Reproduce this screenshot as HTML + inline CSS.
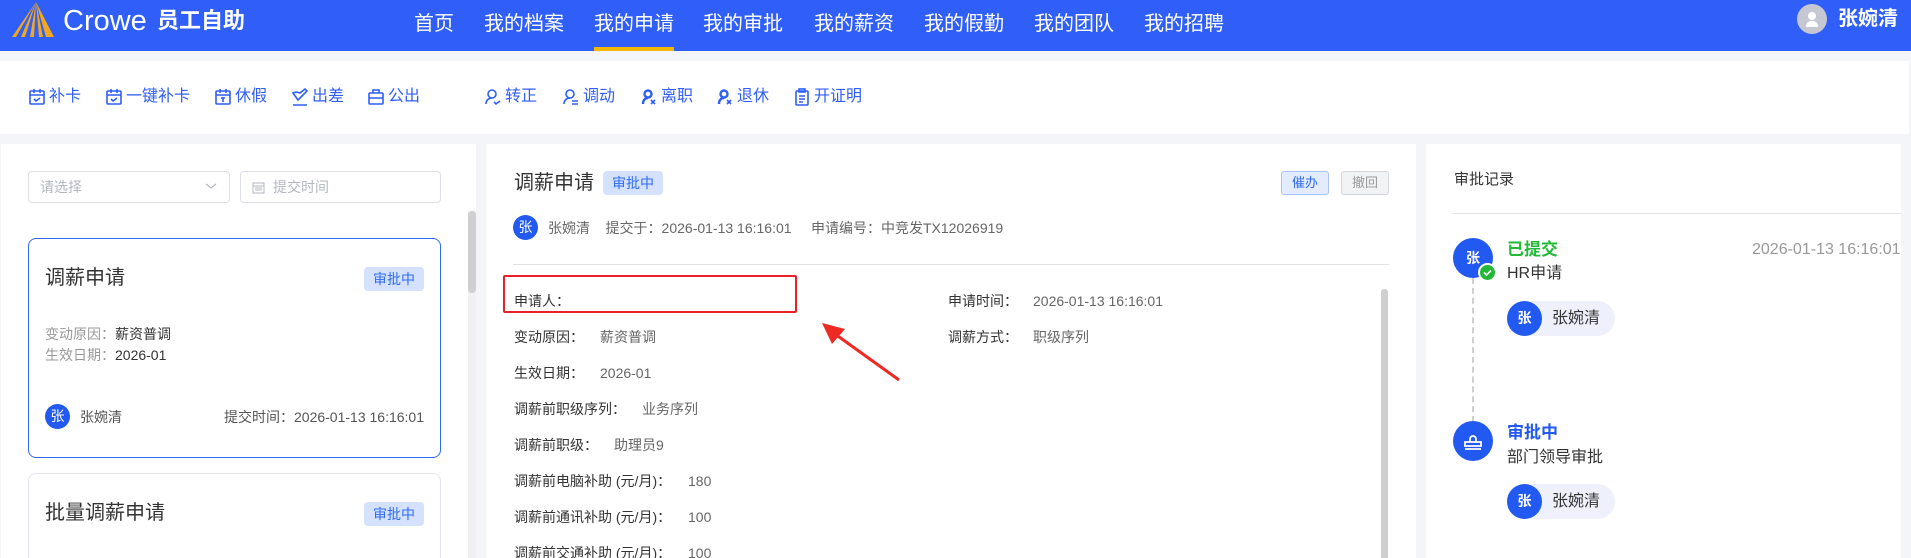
<!DOCTYPE html>
<html style="width:1911px;height:558px;overflow:hidden"><head><meta charset="utf-8"><style>
*{margin:0;padding:0;box-sizing:border-box}
body{width:1911px;height:558px;overflow:hidden;background:#f3f5f9;font-family:"Liberation Sans","Noto Sans CJK SC",sans-serif;position:relative;color:#333}
#w{position:absolute;left:0;top:0;width:1911px;height:558px;overflow:hidden}
.a{position:absolute;white-space:nowrap}
.nav{left:0;top:0;width:1911px;height:51px;background:#2f5ef8}
.ni{color:#fff;font-size:20px;top:11px;line-height:26px}
.tb{color:#2f5ef8;font-size:16px;top:86px;line-height:22px;display:flex;align-items:center;gap:3px}
.tag{background:#d4e2ff;color:#2f6bf5;font-size:14px;border-radius:4px;text-align:center;line-height:24px}
.av{background:#2259f0;color:#fff;border-radius:50%;text-align:center}
.lb{font-size:14px;color:#333;line-height:20px}
.vl{font-size:14px;color:#666;line-height:20px}
</style></head><body><div id="w">
<div class="a nav"></div>
<svg class="a" style="left:10px;top:2px" width="46" height="36" viewBox="0 0 46 36"><path d="M26 0 L44 35 L36 35 Z" fill="#f2a81c"/><path d="M26 0 L33 35 L29 35 Z" fill="#f2a81c"/><path d="M26 0 L24 35 L20 35 Z" fill="#f2a81c"/><path d="M26 0 L15 35 L11 35 Z" fill="#f2a81c"/><path d="M26 0 L6 35 L2 35 Z" fill="#f2a81c"/></svg>
<div class="a" style="left:63px;top:4px;color:#fff;font-size:29px;line-height:34px">Crowe</div>
<div class="a" style="left:157px;top:7px;color:#fff;font-size:22px;font-weight:bold;line-height:28px">员工自助</div>
<div class="a ni" style="left:414px">首页</div>
<div class="a ni" style="left:484px">我的档案</div>
<div class="a ni" style="left:594px">我的申请</div>
<div class="a" style="left:594px;top:47px;width:80px;height:4px;background:#f5b800"></div>
<div class="a ni" style="left:703px">我的审批</div>
<div class="a ni" style="left:814px">我的薪资</div>
<div class="a ni" style="left:924px">我的假勤</div>
<div class="a ni" style="left:1034px">我的团队</div>
<div class="a ni" style="left:1144px">我的招聘</div>
<div class="a" style="left:1797px;top:4px;width:30px;height:30px;border-radius:50%;background:#c5c8d2"><div style="position:absolute;left:11px;top:8px;width:8px;height:8px;border-radius:50%;background:#fff"></div><div style="position:absolute;left:9px;top:17px;width:12px;height:6px;border-radius:5px 5px 0 0;background:#fff"></div></div>
<div class="a" style="left:1838px;top:6px;color:#fff;font-size:20px;font-weight:bold;line-height:26px">张婉清</div>

<div class="a" style="left:0;top:61px;width:1909px;height:73px;background:#fff"></div>
<div class="a tb" style="left:28px"><svg width="18" height="18" viewBox="0 0 18 18" fill="none" stroke="#2f5ef8" stroke-width="1.6"><rect x="2" y="3" width="14" height="13" rx="1"/><path d="M2 7h14M6 1v4M12 1v4M6 11l2 2 4-3"/></svg>补卡</div>
<div class="a tb" style="left:105px"><svg width="18" height="18" viewBox="0 0 18 18" fill="none" stroke="#2f5ef8" stroke-width="1.6"><rect x="2" y="3" width="14" height="13" rx="1"/><path d="M2 7h14M6 1v4M12 1v4M6 11l2 2 4-3"/></svg>一键补卡</div>
<div class="a tb" style="left:214px"><svg width="18" height="18" viewBox="0 0 18 18" fill="none" stroke="#2f5ef8" stroke-width="1.6"><rect x="2" y="3" width="14" height="13" rx="1"/><path d="M2 7h14M6 1v4M12 1v4M7 10h4M9 9v5"/></svg>休假</div>
<div class="a tb" style="left:291px"><svg width="18" height="18" viewBox="0 0 18 18" fill="none" stroke="#2f5ef8" stroke-width="1.6"><path d="M2 5l5 7 9-9-2-2-5 4-4-1zM2 17h14"/></svg>出差</div>
<div class="a tb" style="left:367px"><svg width="18" height="18" viewBox="0 0 18 18" fill="none" stroke="#2f5ef8" stroke-width="1.6"><rect x="2" y="5" width="14" height="11" rx="1"/><path d="M6 5V2h6v3M2 10h14"/></svg>公出</div>
<div class="a tb" style="left:484px"><svg width="18" height="18" viewBox="0 0 18 18" fill="none" stroke="#2f5ef8" stroke-width="1.6"><circle cx="8" cy="6" r="4"/><path d="M2 16c0-4 3-6 6-6M10 14l2 2 4-3"/></svg>转正</div>
<div class="a tb" style="left:562px"><svg width="18" height="18" viewBox="0 0 18 18" fill="none" stroke="#2f5ef8" stroke-width="1.6"><circle cx="8" cy="6" r="4"/><path d="M2 16c0-4 3-6 6-6M10 13h6M10 16h6"/></svg>调动</div>
<div class="a tb" style="left:640px"><svg width="18" height="18" viewBox="0 0 18 18" fill="#2f5ef8" stroke="#2f5ef8" stroke-width="1.6"><circle cx="8" cy="6" r="3.5" fill="none" stroke-width="2.4"/><path d="M3 16c0-4 2-6 5-6" fill="none" stroke-width="2.4"/><path d="M11 12l4 4M15 12l-4 4"/></svg>离职</div>
<div class="a tb" style="left:716px"><svg width="18" height="18" viewBox="0 0 18 18" fill="#2f5ef8" stroke="#2f5ef8" stroke-width="1.6"><circle cx="8" cy="6" r="3.5" fill="none" stroke-width="2.4"/><path d="M3 16c0-4 2-6 5-6" fill="none" stroke-width="2.4"/><path d="M11 12l4 4M15 12l-4 4"/></svg>退休</div>
<div class="a tb" style="left:793px"><svg width="18" height="18" viewBox="0 0 18 18" fill="none" stroke="#2f5ef8" stroke-width="1.6"><rect x="3" y="3" width="12" height="14" rx="1"/><rect x="6" y="1" width="6" height="3"/><path d="M6 8h6M6 11h6M6 14h4"/></svg>开证明</div>

<div class="a" style="left:1px;top:144px;width:475px;height:414px;background:#fff"></div>
<div class="a" style="left:28px;top:171px;width:202px;height:32px;border:1px solid #dcdfe6;border-radius:4px"></div>
<div class="a" style="left:40px;top:177px;font-size:14px;color:#b4b7bf;line-height:20px">请选择</div>
<svg class="a" style="left:205px;top:181px" width="12" height="10" viewBox="0 0 12 10"><path d="M1 3l5 4 5-4" fill="none" stroke="#b4b7bf" stroke-width="1.2"/></svg>
<div class="a" style="left:240px;top:171px;width:201px;height:32px;border:1px solid #dcdfe6;border-radius:4px"></div>
<svg class="a" style="left:252px;top:181px" width="13" height="13" viewBox="0 0 13 13"><rect x="1" y="2" width="11" height="10" fill="none" stroke="#b4b7bf"/><path d="M1 5h11M3 7h7M3 9h7" stroke="#b4b7bf"/></svg>
<div class="a" style="left:273px;top:177px;font-size:14px;color:#b4b7bf;line-height:20px">提交时间</div>
<div class="a" style="left:468px;top:211px;width:8px;height:347px;background:#f0f0f0"></div>
<div class="a" style="left:468px;top:211px;width:8px;height:82px;background:#cfcfcf;border-radius:4px"></div>
<div class="a" style="left:28px;top:238px;width:413px;height:220px;border:1px solid #2f6bf5;border-radius:8px"></div>
<div class="a" style="left:45px;top:264px;font-size:20px;line-height:28px;color:#333">调薪申请</div>
<div class="a tag" style="left:364px;top:267px;width:60px">审批中</div>
<div class="a" style="left:45px;top:324px;font-size:14px;line-height:20px;color:#999">变动原因：<span style="color:#333">薪资普调</span></div>
<div class="a" style="left:45px;top:345px;font-size:14px;line-height:20px;color:#999">生效日期：<span style="color:#333">2026-01</span></div>
<div class="a av" style="left:45px;top:404px;width:25px;height:25px;line-height:25px;font-size:14px">张</div>
<div class="a" style="left:80px;top:407px;font-size:14px;line-height:20px;color:#555">张婉清</div>
<div class="a" style="left:224px;top:407px;font-size:14px;line-height:20px;color:#555">提交时间：2026-01-13 16:16:01</div>
<div class="a" style="left:28px;top:473px;width:413px;height:85px;border:1px solid #e4e6eb;border-bottom:none;border-radius:8px 8px 0 0"></div>
<div class="a" style="left:45px;top:499px;font-size:20px;line-height:28px;color:#333">批量调薪申请</div>
<div class="a tag" style="left:364px;top:502px;width:60px">审批中</div>

<div class="a" style="left:486px;top:144px;width:930px;height:414px;background:#fff"></div>
<div class="a" style="left:514px;top:169px;font-size:20px;line-height:28px;color:#333">调薪申请</div>
<div class="a tag" style="left:603px;top:171px;width:60px">审批中</div>
<div class="a" style="left:1281px;top:171px;width:48px;height:24px;border:1px solid #a9c3fb;background:#e3ecff;color:#2f6bf5;font-size:13px;text-align:center;line-height:22px;border-radius:3px">催办</div>
<div class="a" style="left:1341px;top:171px;width:48px;height:24px;border:1px solid #d5d7dc;background:#f2f3f5;color:#999;font-size:13px;text-align:center;line-height:22px;border-radius:3px">撤回</div>
<div class="a av" style="left:513px;top:215px;width:25px;height:25px;line-height:25px;font-size:14px">张</div>
<div class="a" style="left:548px;top:218px;font-size:14px;line-height:20px;color:#666">张婉清 &nbsp;&nbsp; 提交于：2026-01-13 16:16:01 &nbsp;&nbsp;&nbsp; 申请编号：中竞发TX12026919</div>
<div class="a" style="left:513px;top:264px;width:876px;height:1px;background:#e0e2e6"></div>
<div class="a" style="left:503px;top:275px;width:294px;height:38px;border:2px solid #e8202a;border-radius:2px"></div>
<div class="a lb" style="left:514px;top:291px">申请人：</div>
<div class="a lb" style="left:948px;top:291px">申请时间：</div><div class="a vl" style="left:1033px;top:291px">2026-01-13 16:16:01</div>
<div class="a lb" style="left:514px;top:327px">变动原因：</div><div class="a vl" style="left:600px;top:327px">薪资普调</div>
<div class="a lb" style="left:948px;top:327px">调薪方式：</div><div class="a vl" style="left:1033px;top:327px">职级序列</div>
<div class="a lb" style="left:514px;top:363px">生效日期：</div><div class="a vl" style="left:600px;top:363px">2026-01</div>
<div class="a lb" style="left:514px;top:399px">调薪前职级序列：</div><div class="a vl" style="left:642px;top:399px">业务序列</div>
<div class="a lb" style="left:514px;top:435px">调薪前职级：</div><div class="a vl" style="left:614px;top:435px">助理员9</div>
<div class="a lb" style="left:514px;top:471px">调薪前电脑补助 (元/月)：</div><div class="a vl" style="left:688px;top:471px">180</div>
<div class="a lb" style="left:514px;top:507px">调薪前通讯补助 (元/月)：</div><div class="a vl" style="left:688px;top:507px">100</div>
<div class="a" style="left:514px;top:543px;height:15px;overflow:hidden;font-size:14px;color:#333;line-height:20px">调薪前交通补助 (元/月)：</div><div class="a" style="left:688px;top:543px;height:15px;overflow:hidden;font-size:14px;color:#666;line-height:20px">100</div>
<div class="a" style="left:1381px;top:289px;width:7px;height:269px;background:#cfcfcf;border-radius:3px 3px 0 0"></div>
<svg class="a" style="left:815px;top:318px" width="90" height="66" viewBox="0 0 90 66"><path d="M84 62 L20 16" stroke="#ee2a24" stroke-width="3"/><path d="M7 5 L30 11 L17 26 Z" fill="#ee2a24"/></svg>

<div class="a" style="left:1426px;top:144px;width:475px;height:414px;background:#fff"></div>
<div class="a" style="left:1454px;top:169px;font-size:15px;line-height:22px;color:#333">审批记录</div>
<div class="a" style="left:1453px;top:213px;width:448px;height:1px;background:#e0e2e6"></div>
<div class="a" style="left:1472px;top:278px;width:0;height:144px;border-left:2px dashed #d0d0d0"></div>
<div class="a av" style="left:1453px;top:238px;width:40px;height:40px;line-height:40px;font-size:14px;font-weight:bold">张</div>
<div class="a" style="left:1478px;top:263px;width:19px;height:19px;border-radius:50%;background:#22b936;border:2px solid #fff"><svg style="position:absolute;left:2px;top:2px" width="11" height="11" viewBox="0 0 11 11"><path d="M2 5.5l2.5 2.5 4.5-4.5" fill="none" stroke="#fff" stroke-width="1.6"/></svg></div>
<div class="a" style="left:1507px;top:238px;font-size:17px;line-height:24px;color:#22b936;font-weight:bold">已提交</div>
<div class="a" style="left:1752px;top:238px;font-size:16px;line-height:24px;color:#999">2026-01-13 16:16:01</div>
<div class="a" style="left:1507px;top:262px;font-size:16px;line-height:24px;color:#333">HR申请</div>
<div class="a" style="left:1507px;top:301px;width:108px;height:35px;border-radius:18px;background:#eef1fc"></div>
<div class="a av" style="left:1507px;top:301px;width:35px;height:35px;line-height:35px;font-size:14px;font-weight:bold">张</div>
<div class="a" style="left:1552px;top:307px;font-size:16px;line-height:24px;color:#333">张婉清</div>
<div class="a av" style="left:1453px;top:421px;width:40px;height:40px"><svg style="position:absolute;left:8px;top:8px" width="24" height="24" viewBox="0 0 24 24" fill="none" stroke="#fff" stroke-width="1.8"><path d="M9 13V10a3 3 0 1 1 6 0v3M4 13h16v4H4zM4 20h16"/></svg></div>
<div class="a" style="left:1507px;top:421px;font-size:17px;line-height:24px;color:#2259f0;font-weight:bold">审批中</div>
<div class="a" style="left:1507px;top:446px;font-size:16px;line-height:24px;color:#333">部门领导审批</div>
<div class="a" style="left:1507px;top:484px;width:108px;height:35px;border-radius:18px;background:#eef1fc"></div>
<div class="a av" style="left:1507px;top:484px;width:35px;height:35px;line-height:35px;font-size:14px;font-weight:bold">张</div>
<div class="a" style="left:1552px;top:490px;font-size:16px;line-height:24px;color:#333">张婉清</div>
</div></body></html>
